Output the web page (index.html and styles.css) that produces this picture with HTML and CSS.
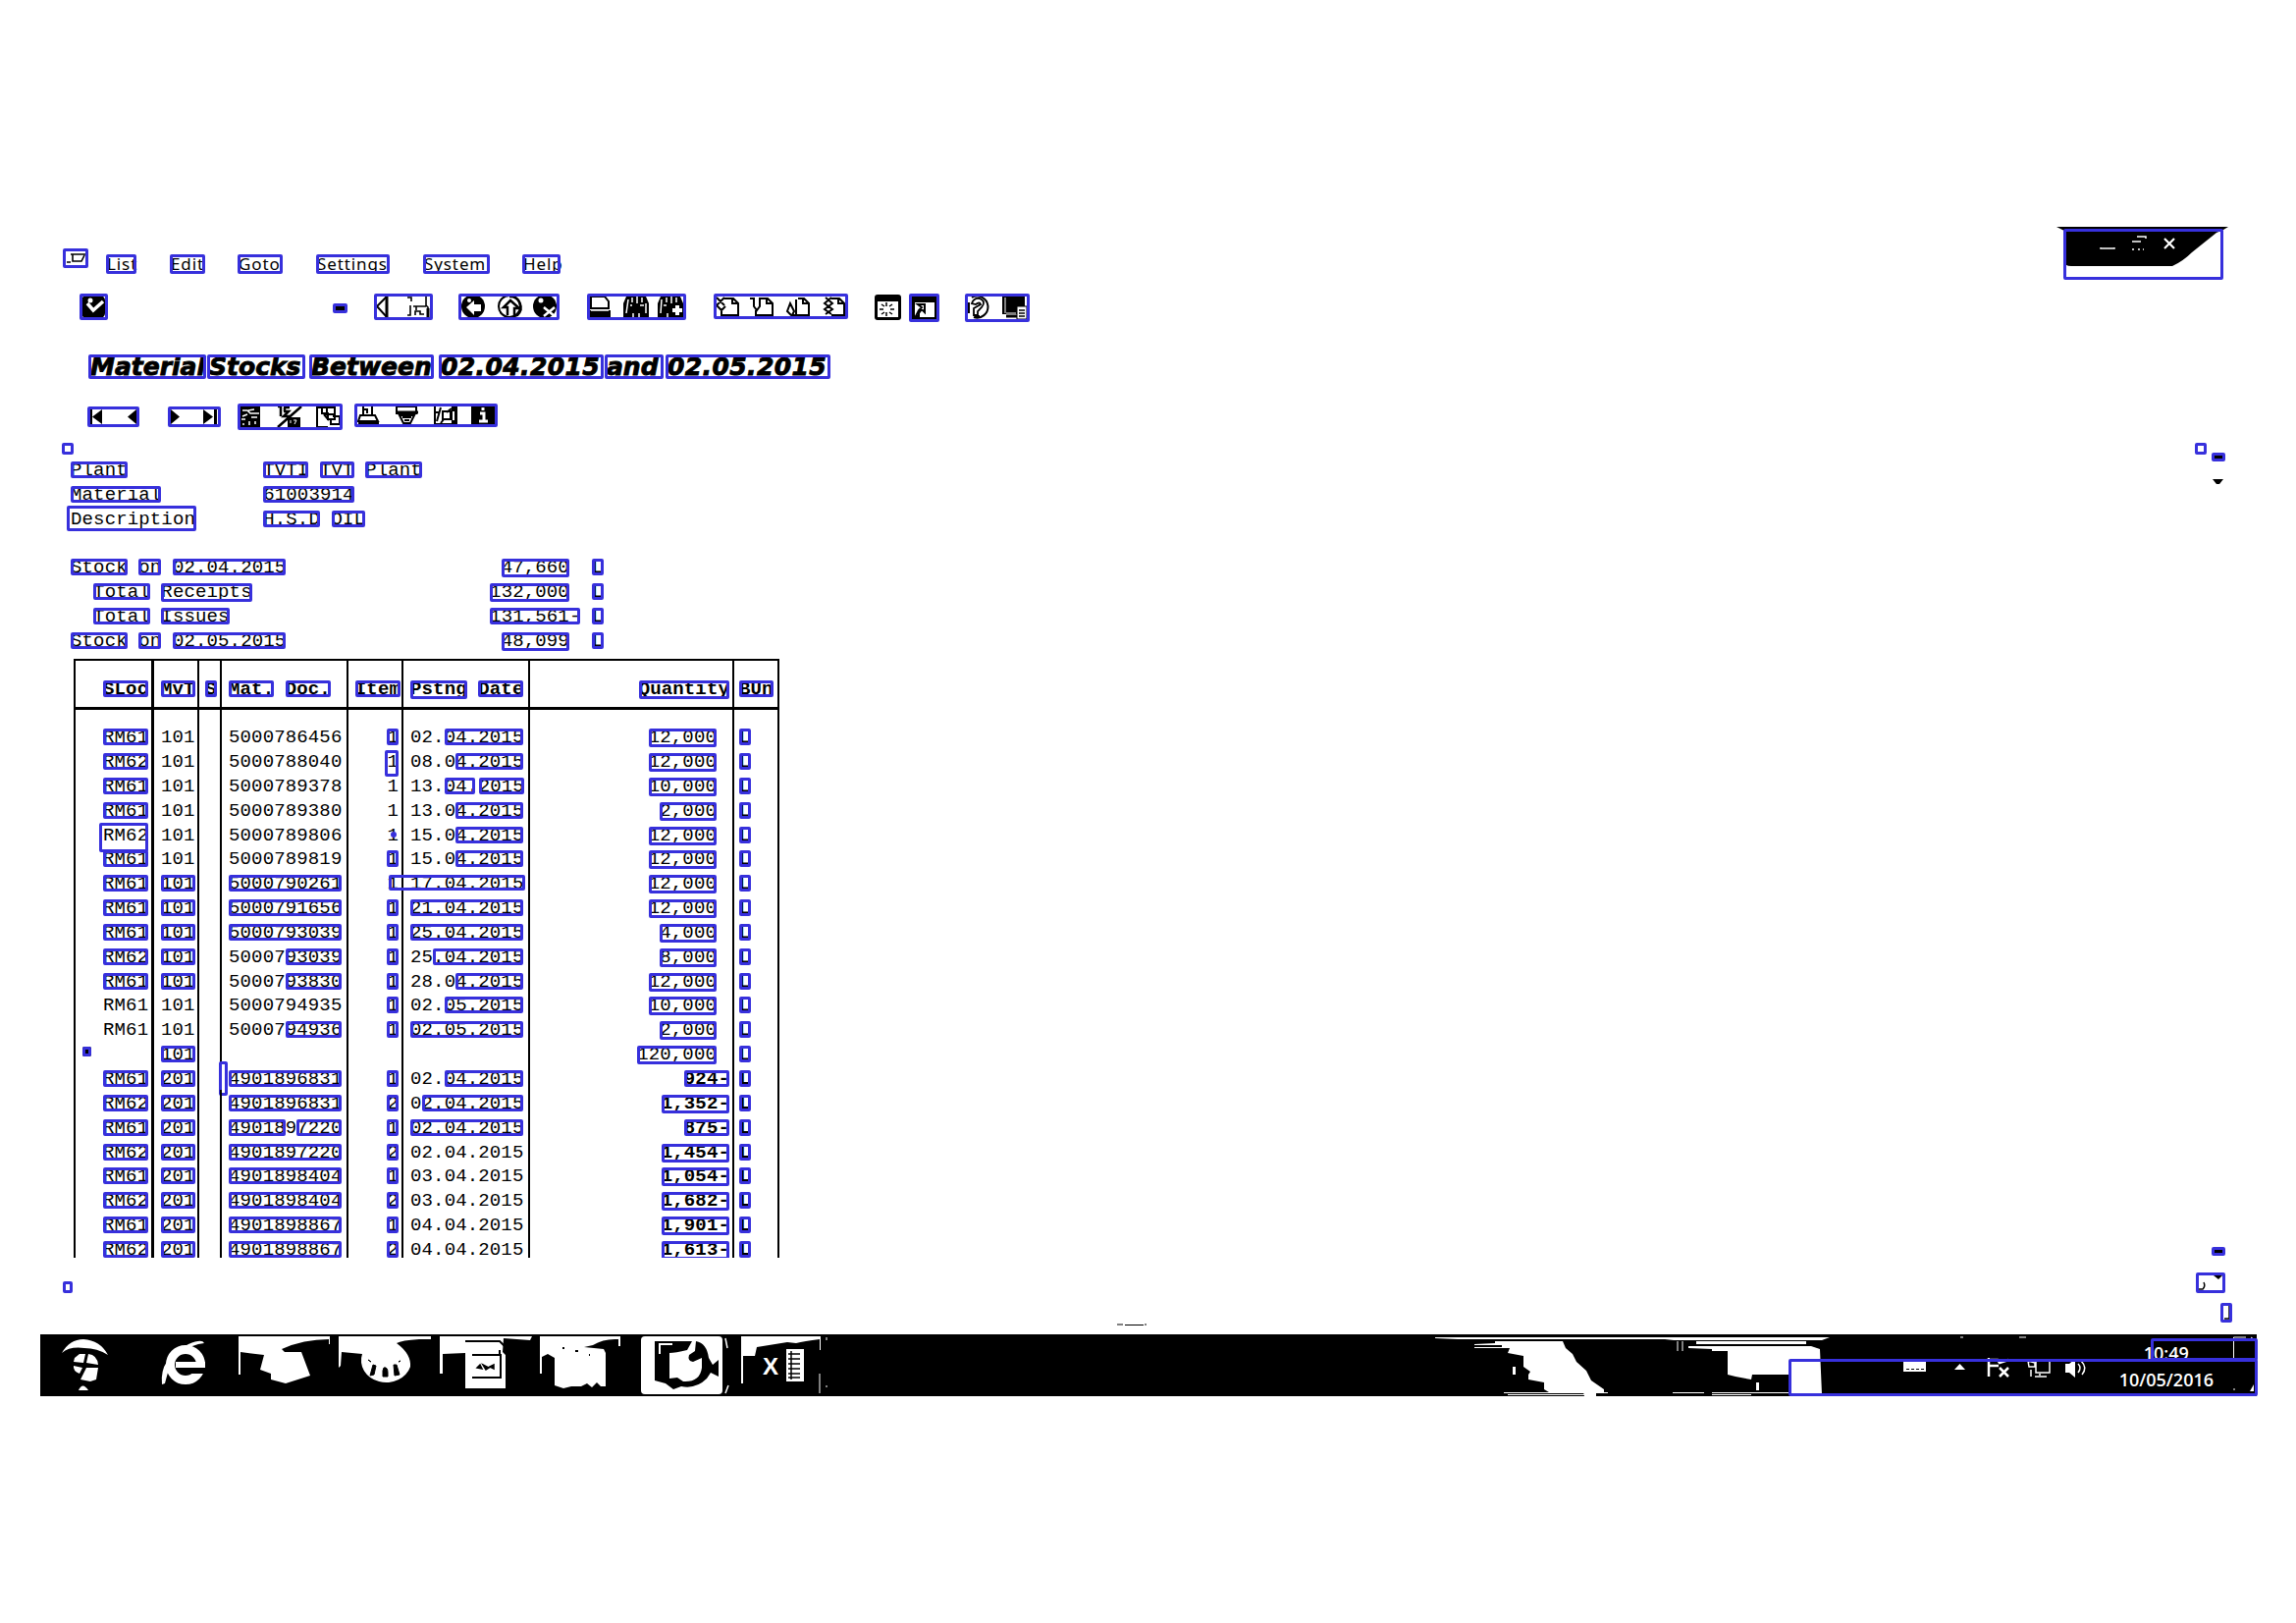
FILE: index.html
```html
<!DOCTYPE html>
<html lang="en">
<head>
<meta charset="utf-8">
<title>Material Stocks</title>
<link rel="stylesheet" href="styles.css">
</head>
<body>
<main class="screen">
  <header class="menubar">
    <svg class="box menu-icon" width="26" height="20"><path d="M8 6H23M10 6V13H19L22 7M12 13H19M4 14H8" fill="none" stroke="#000" stroke-width="1.6"/></svg>
    <nav class="menus">
      <span class="box m-list">List</span><span class="box m-edit">Edit</span><span class="box m-goto">Goto</span><span class="box m-set">Settings</span><span class="box m-sys">System</span><span class="box m-help">Help</span>
    </nav>
    <div class="window-controls">
      <svg width="176" height="54"><path d="M0 0H175L170 3L163 6L138 26Q129 35 118 40H15Q8 40 8 35V4Z"/><path d="M45 21V22H59V21M77 15H86M82 10H91V12M77 23h2m4 0h2m3 0h1" fill="none" stroke="#fff" stroke-width="1.5"/><path d="M110 12L120 22M120 12L110 22" stroke="#fff" stroke-width="2.2"/></svg>
      <span class="box controls-box"></span>
    </div>
  </header>

  <div class="toolbar">
    <svg class="box t-check" width="29" height="27"><rect x="2" y="2" width="24" height="23" rx="5"/><path d="M8 10L14 17L24 8" fill="none" stroke="#fff" stroke-width="3.500"/><circle cx="11" cy="7" r="2.5" fill="#fff"/></svg>
    <svg class="box t-dash" width="15" height="10"><path d="M3 5H12" stroke="#000" stroke-width="4"/></svg>
    <svg class="box t-save" width="60" height="27" fill="none" stroke="#000"><path d="M13 3L3 13L13 24Z" stroke-width="2"/><path d="M13 3V24" stroke-width="3"/><path d="M34 4H38V8M37 12V22H34M40 13H53M53 3V12L55 14V24M42 22V18H47V21H51M43 13V17" stroke-width="1.6"/><path d="M55 15V25" stroke-width="3"/></svg>
    <svg class="box t-nav" width="103" height="27"><circle cx="15" cy="13" r="12"/><path d="M8 14L16 7V11H23V18H16V22Z" fill="#fff"/><circle cx="11" cy="7" r="2" fill="#fff"/><circle cx="52" cy="13" r="11" fill="none" stroke="#000" stroke-width="2"/><path d="M52 3A11 11 0 0 1 60 22L57 23V15H62L53 7L46 14H50V22" fill="none" stroke="#000" stroke-width="2.500"/><circle cx="88" cy="13" r="12"/><circle cx="84" cy="7" r="2.5" fill="#fff"/><path d="M87 14L98 23M98 14L87 23" stroke="#fff" stroke-width="2.5"/></svg>
    <svg class="box t-find" width="101" height="27"><path d="M4 15V3H18L22 8V15Z" fill="#fff" stroke="#000" stroke-width="2"/><path d="M3 17H24V25H3Z"/><path d="M4 17H22" stroke="#fff" stroke-width="1.5"/><path d="M37 25V10L40 3H60L63 10V25Z"/><path d="M42 6L40 20M46 4V9M51 3V10M56 4V9M44 12H46M54 12H58M47 20V25M53 20V25M60 10V20" stroke="#fff" stroke-width="1.5"/><path d="M72 25V10L75 3H95L98 10V25Z"/><path d="M76 6L75 20M81 4V9M86 3V10M91 4V9M78 12H81M82 20V25" stroke="#fff" stroke-width="1.5"/><path d="M92 12V22M87 17H97" stroke="#fff" stroke-width="4"/></svg>
    <svg class="box t-pages" width="137" height="26" fill="none" stroke="#000" stroke-width="2"><path d="M11 5H20L25 10V22H8V18M19 4V10H25M3 4L11 12M11 4L3 12L8 17L12 13"/><path d="M48 5H55L60 10V22H43V17M54 4V10H60M37 5H41V13L44 17L47 13V5H50"/><path d="M86 5H92L97 10V22H84M91 4V10H97M79 22L75 18L78 10L82 18L80 22H84V6"/><path d="M120 5H128L133 10V22H120M127 4V10H133M114 4L121 10L113 16L120 21M120 4L113 10L121 16L114 21"/></svg>
    <svg class="t-new" width="28" height="26"><rect width="27" height="26" rx="3"/><rect x="3" y="7" width="21" height="16" fill="#fff"/><path d="M12 8V12M12 18V22M5 15H9M16 15H20M7 10L10 12M18 10L15 12M7 20L10 18M18 20L15 18" stroke="#000" stroke-width="1.5"/></svg>
    <svg class="box t-link" width="31" height="29"><path d="M3 3H28V26H3Z"/><path d="M6 9H26V24H6Z" fill="#fff"/><path d="M9 11H16V19L13 16L10 20V23H7L10 17L13 14Z" fill="none" stroke="#000" stroke-width="2"/></svg>
    <svg class="box t-help" width="66" height="29" fill="none" stroke="#000"><path d="M7 4A11 11 0 1 1 9 24M4 9V20" stroke-width="2"/><path d="M7 10Q9 4 15 5Q22 8 17 14L13 18V22H9V15L16 11Q15 8 11 11ZM10 23H15" stroke-width="1.8"/><path d="M38 3H61V21H38Z" fill="#000" stroke="none"/><path d="M41 4V20M42 20H52" stroke="#fff"/><path d="M53 13H63V26H53Z" fill="#fff" stroke-width="1"/><path d="M55 17H61M55 20H61M55 23H61" stroke-width="1.5"/><path d="M42 23H53" stroke-width="3"/></svg>
  </div>

  <h1 class="title"><span class="box w1">Material</span><span class="box w2">Stocks</span><span class="box w3">Between</span><span class="box w4">02.04.2015</span><span class="box w5">and</span><span class="box w6">02.05.2015</span></h1>

  <div class="toolbar list-tools">
    <svg class="box l-first" width="53" height="21"><path d="M3 3H5V18H3ZM5 10.500L15 3V18ZM41 10.500L50 3V18Z"/></svg>
    <svg class="box l-last" width="54" height="21"><path d="M3 3L12 10.500L3 18ZM36 3L46 10.500L36 18ZM47 3H50V18H47Z"/></svg>
    <svg class="box l-sum" width="107" height="27"><path d="M3 3H23V24H3Z"/><path d="M5 7H10L13 10H22M5 13L10 11M4 16H8M14 14H20M11 7L17 6M12 18V22M6 20V22M18 18V21" stroke="#fff" stroke-width="1.5" fill="none"/><path d="M41 3H44V13M47 4H53M47 8H52L47 13H53M48 4V8M41 24L65 3" fill="none" stroke="#000" stroke-width="2.500"/><path d="M51 14H64V24H51Z"/><path d="M54 17V20M57 17H60L58 21" stroke="#fff" fill="none"/><path d="M92 24H81V4H91V9M86 4V10H92M90 4H99V11H88M92 9V16H99V11M97 13H104V21H95V16M88 11L93 17" fill="none" stroke="#000" stroke-width="2"/></svg>
    <svg class="box l-print" width="146" height="24"><g fill="none" stroke="#000" stroke-width="2"><path d="M9 3V12M18 3V12M6 12H21L24 18H4ZM9 6H13V10"/><path d="M4 20H25" stroke-width="3"/><path d="M43 3H63V10H43ZM46 12L50 20H57L61 12ZM49 14H58M51 17H56"/><path d="M42 9H65" stroke-width="3"/><path d="M82 3V21H104V3M82 9H87M88 4L84 18M90 8H98V16H90ZM99 5L94 9M91 16L88 20"/></g><path d="M99 3H105V21H99Z"/><path d="M101 8V17" stroke="#fff" stroke-width="2"/><path d="M119 3H143V21H119Z"/><path d="M131 4V7M128 10H132V18M127 18H136" fill="none" stroke="#fff" stroke-width="3"/></svg>
  </div>

  <section class="work">
    <div class="report">
      <span class="box corner"></span>
      <div class="list">
        <p><mark>Plant</mark>            <mark>TVTI</mark> <mark>TVT</mark> <mark>Plant</mark></p>
        <p><mark>Material</mark>         <mark>61003914</mark></p>
        <p><span class="desc">Description<span class="box desc-box"></span></span>      <mark>H.S.D</mark> <mark>OIL</mark></p>
        <p></p>
        <p><mark>Stock</mark> <mark>on</mark> <mark>02.04.2015</mark>                   <mark class="q">47,660</mark>  <mark>L</mark></p>
        <p>  <mark>Total</mark> <mark class="q">Receipts</mark>                     <mark class="q">132,000</mark>  <mark>L</mark></p>
        <p>  <mark>Total</mark> <mark>Issues</mark>                       <mark>131,561-</mark> <mark>L</mark></p>
        <p><mark>Stock</mark> <mark>on</mark> <mark>02.05.2015</mark>                   <mark class="q">48,099</mark>  <mark>L</mark></p>
      </div>
      <div class="table">
        <div class="row head"><p><mark>SLoc</mark></p><p><mark>MvT</mark></p><p><mark>S</mark></p><p><mark>Mat.</mark> <mark>Doc.</mark></p><p><mark>Item</mark></p><p><mark class="q">Pstng</mark> <mark>Date</mark></p><p><mark class="q">Quantity</mark></p><p><mark>BUn</mark></p></div>
        <div class="row first"><p><mark>RM61</mark></p><p>101</p><p></p><p>5000786456</p><p><mark>1</mark></p><p>02.<mark>04.2015</mark></p><p><mark class="q">12,000</mark></p><p><mark>L</mark></p></div>
        <div class="row"><p><mark>RM62</mark></p><p>101</p><p></p><p>5000788040</p><p>1<span class="box tall-item"></span></p><p>08.0<mark>4.2015</mark></p><p><mark class="q">12,000</mark></p><p><mark>L</mark></p></div>
        <div class="row"><p><mark>RM61</mark></p><p>101</p><p></p><p>5000789378</p><p>1</p><p>13.<mark class="short">04.</mark><mark>2015</mark></p><p><mark class="q">10,000</mark></p><p><mark>L</mark></p></div>
        <div class="row"><p><mark>RM61</mark></p><p>101</p><p></p><p>5000789380</p><p>1</p><p>13.0<mark>4.2015</mark></p><p><mark class="q">2,000</mark></p><p><mark>L</mark></p></div>
        <div class="row"><p>RM62<span class="box big-sloc"></span></p><p>101</p><p></p><p>5000789806</p><p>1<span class="dot"></span></p><p>15.0<mark>4.2015</mark></p><p><mark class="q">12,000</mark></p><p><mark>L</mark></p></div>
        <div class="row"><p><mark>RM61</mark></p><p>101</p><p></p><p>5000789819</p><p><mark>1</mark></p><p>15.0<mark>4.2015</mark></p><p><mark class="q">12,000</mark></p><p><mark>L</mark></p></div>
        <div class="row"><p><mark>RM61</mark></p><p><mark>101</mark></p><p></p><p><mark>5000790261</mark></p><p>1<span class="box wide"></span></p><p>17.04.2015</p><p><mark class="q">12,000</mark></p><p><mark>L</mark></p></div>
        <div class="row"><p><mark>RM61</mark></p><p><mark>101</mark></p><p></p><p><mark>5000791656</mark></p><p><mark>1</mark></p><p><mark>21.04.2015</mark></p><p><mark class="q">12,000</mark></p><p><mark>L</mark></p></div>
        <div class="row"><p><mark>RM61</mark></p><p><mark>101</mark></p><p></p><p><mark>5000793039</mark></p><p><mark>1</mark></p><p><mark>25.04.2015</mark></p><p><mark class="q">4,000</mark></p><p><mark>L</mark></p></div>
        <div class="row"><p><mark>RM62</mark></p><p><mark>101</mark></p><p></p><p>50007<mark>93039</mark></p><p><mark>1</mark></p><p>25<mark>.04.2015</mark></p><p><mark class="q">8,000</mark></p><p><mark>L</mark></p></div>
        <div class="row"><p><mark>RM61</mark></p><p><mark>101</mark></p><p></p><p>50007<mark>93830</mark></p><p><mark>1</mark></p><p>28.0<mark>4.2015</mark></p><p><mark class="q">12,000</mark></p><p><mark>L</mark></p></div>
        <div class="row"><p>RM61</p><p>101</p><p></p><p>5000794935</p><p><mark>1</mark></p><p>02.<mark>05.2015</mark></p><p><mark class="q">10,000</mark></p><p><mark>L</mark></p></div>
        <div class="row"><p>RM61</p><p>101</p><p></p><p>50007<mark>94936</mark></p><p><mark>1</mark></p><p><mark>02.05.2015</mark></p><p><mark class="q">2,000</mark></p><p><mark>L</mark></p></div>
        <div class="row"><p><span class="box star"></span></p><p><mark>101</mark></p><p></p><p></p><p></p><p></p><p><mark class="q">120,000</mark></p><p><mark>L</mark></p></div>
        <div class="row neg"><p><mark>RM61</mark></p><p><mark>201</mark></p><p></p><p><mark>4901896831</mark><span class="box sliver"></span></p><p><mark>1</mark></p><p>02.<mark>04.2015</mark></p><p><mark>924-</mark></p><p><mark>L</mark></p></div>
        <div class="row neg"><p><mark>RM62</mark></p><p><mark>201</mark></p><p></p><p><mark>4901896831</mark></p><p><mark>2</mark></p><p>0<mark>2.04.2015</mark></p><p><mark class="q">1,352-</mark></p><p><mark>L</mark></p></div>
        <div class="row neg"><p><mark>RM61</mark></p><p><mark>201</mark></p><p></p><p><mark>49018</mark>9<mark>7220</mark></p><p><mark>1</mark></p><p><mark>02.04.2015</mark></p><p><mark>875-</mark></p><p><mark>L</mark></p></div>
        <div class="row neg"><p><mark>RM62</mark></p><p><mark>201</mark></p><p></p><p><mark>4901897220</mark></p><p><mark>2</mark></p><p>02.04.2015</p><p><mark class="q">1,454-</mark></p><p><mark>L</mark></p></div>
        <div class="row neg"><p><mark>RM61</mark></p><p><mark>201</mark></p><p></p><p><mark>4901898404</mark></p><p><mark>1</mark></p><p>03.04.2015</p><p><mark class="q">1,054-</mark></p><p><mark>L</mark></p></div>
        <div class="row neg"><p><mark>RM62</mark></p><p><mark>201</mark></p><p></p><p><mark>4901898404</mark></p><p><mark>2</mark></p><p>03.04.2015</p><p><mark class="q">1,682-</mark></p><p><mark>L</mark></p></div>
        <div class="row neg"><p><mark>RM61</mark></p><p><mark>201</mark></p><p></p><p><mark>4901898867</mark></p><p><mark>1</mark></p><p>04.04.2015</p><p><mark class="q">1,901-</mark></p><p><mark>L</mark></p></div>
        <div class="row neg"><p><mark>RM62</mark></p><p><mark>201</mark></p><p></p><p><mark>4901898867</mark></p><p><mark>2</mark></p><p>04.04.2015</p><p><mark class="q">1,613-</mark></p><p><mark>L</mark></p></div>
      </div>
      <span class="box corner bottom"></span>
    </div>
    <div class="scroll">
      <span class="box corner"></span>
      <div class="arrows">
        <svg class="box" width="14" height="9"><path d="M3 5H11" stroke="#000" stroke-width="4"/></svg>
        <svg class="down" width="14" height="7"><path d="M1 0H12L8 5H5Z"/></svg>
        <svg class="box up2" width="14" height="9"><path d="M3 5H11" stroke="#000" stroke-width="4"/></svg>
        <svg class="box down2" width="30" height="21"><path d="M18 3H27L23 7Z"/><path d="M8 10Q10 14 7 17H3" fill="none" stroke="#000" stroke-width="1.500"/></svg>
        <svg class="box grip" width="12" height="20"><path d="M9 3V16H4" fill="none" stroke="#000" stroke-width="1.500"/></svg>
      </div>
    </div>
  </section>
  <svg class="handle" width="30" height="3"><path d="M0 1H6M8 1.500H27M28 1H30" stroke="#000"/></svg>

  <footer class="taskbar">
    <svg width="101" height="63" fill="#fff"><path d="M22 19Q30 5 44 5Q61 6 69 21Q58 14 45 14Q30 12 22 19Z"/><path d="M35 24L40 20H46L44 29L34 28ZM49 20Q58 21 59 31L47 29ZM34 32L43 34L40 40Q33 37 34 32ZM47 34L59 34L57 46L51 48L41 46Z"/><path d="M39 57Q43 48 49 57Z"/></svg>
    <svg width="101" height="63"><circle cx="47" cy="31" r="15.500" fill="none" stroke="#fff" stroke-width="9"/><path d="M37 28H67V34H37Z" fill="#fff"/><path d="M49 34H70V40H49Z"/><path d="M23 51Q20 24 50 10Q64 4 66 9L60 10Q32 18 29 39Q27 46 26 50Z" fill="#fff"/></svg>
    <svg class="tile" height="63"><path d="M0 2H93V10H92V5Q66 5 44 15L47 18L64 18L73 42L48 50L33 46V40L22 36L26 21L2 18V41H0Z" fill="#fff"/></svg>
    <svg class="tile" height="63"><path d="M0 2H94V5H82Q64 6 59 9Q74 20 73 33A25 22 0 1 1 24 20L3 18L2 32L0 34Z" fill="#fff"/><path d="M35 31L38 32L36 41L32 42ZM46 34Q50 33 50 39V43H45V37ZM56 31L59 31L62 41L57 42ZM30 26L33 28ZM61 28L63 27Z" stroke="#000"/></svg>
    <svg class="tile" height="63"><path d="M0 2H94L92 6L65 4L64 18L67 21V55H26V19L3 20V40H0Z" fill="#fff"/><path d="M26 7H61L66 12M33 21H62V44H33M61 16V22" fill="none" stroke="#000" stroke-width="2"/><path d="M38 34L41 31L43 35ZM44 31L50 34L47 36ZM51 33L55 31V35Z" stroke="#000" stroke-width="1.500"/></svg>
    <svg class="tile" height="63"><path d="M0 2H82V12H80V5Q65 4 54 11L45 13L65 15L67 19V53H62L58 49L53 54L48 50L42 53H32L24 55L15 52V24L8 20L2 23V40H0Z" fill="#fff"/><path d="M23 14h2M36 17h3M50 21h1" stroke="#000" stroke-width="2"/></svg>
    <svg class="tile" height="63"><rect y="2" width="83" height="59" rx="4" fill="#fff"/><path d="M14 7H52L47 16Q35 19 29 19V45L37 44L43 48Q60 49 62 34V24L53 28Q47 27 49 21L55 17L56 7Q67 9 69 24L73 31L79 26V43L71 39L67 45Q56 56 41 53L33 56L25 50L14 47Z"/><path d="M19 20V10H32" fill="none" stroke="#fff" stroke-width="2"/><path d="M86 4L88 14M86 60L89 52M4 40h2" stroke="#fff" stroke-width="1.500"/></svg>
    <svg class="tile" height="63"><path d="M0 2H81V16H80V5Q64 7 56 9L47 8L16 13L14 22L2 22V50H0Z" fill="#fff"/><path d="M46 15H64V48H46Z" fill="#fff"/><path d="M48 20H60M48 25H60M48 30H60M48 35H60M48 40H60M48 44H60M51 17V46" stroke="#000" stroke-width="1.500"/><text x="22" y="41" class="xl">X</text><path d="M80 40V60M87 3V6M87 52V54" stroke="#fff"/></svg>
    <svg class="glare" width="430" height="63" fill="#fff"><path d="M22 3H424L416 6L265 6L256 5H45L22 4Z"/><path d="M62 10L83 9V7H152L155 14L162 20L166 28L176 37L181 47L194 56V59H186V63H174L173 59H138L133 56L133 49L117 46V41L119 38L112 33V22L96 19L98 14L62 14V13H90V11H62Z"/><path d="M288 7H400V10H288ZM280 12H405L414 15L416 61H384V41H345L344 46L328 43L320 41V17H304V15L280 14ZM101 33H104V41H101ZM349 49H352V57H349Z"/><path d="M92 59.500H198M96 61.500H180M264 59.500H296M304 59.500H384M304 61.500H344M269 7V17M274 7V17" stroke="#fff"/></svg>
    <svg class="tray" width="220" height="63" fill="#fff"><path d="M19 28H42V38H19ZM71 36L76.500 30L82 36Z"/><path d="M22 35.500H40" stroke="#000" stroke-dasharray="3 2"/><path d="M106 24V43M108 26H115L117 29L126 26M107 32H116M117 34L126 43M126 34L117 43" stroke="#fff" stroke-width="2.500" fill="none"/><path d="M146 27L153 29V33H147ZM149 36V43M154 27V39H168V27M153 43H165M158 40V42" stroke="#fff" stroke-width="1.500" fill="none"/><path d="M184 30H188L194 25V44L188 39H184Z"/><path d="M197 30Q201 34 197 39M200 27Q207 34 201 41" stroke="#fff" stroke-width="1.500" fill="none"/><path d="M77 3h3M137 3h7" stroke="#fff"/></svg>
    <div class="clock"><span>10:49</span><span>10/05/2016</span></div>
    <svg width="25" height="63" fill="none" stroke="#fff"><path d="M2.500 24V3H15M2 56h2M20 3L23 5"/><path d="M23 51V58H19Z" fill="#fff" stroke="none"/></svg>
    <span class="box time-box"></span><span class="box date-box"></span>
  </footer>
</main>
</body>
</html>
```
FILE: styles.css
```css
* { box-sizing: border-box; margin: 0; }
body { background: #fff; color: #000; }
svg { display: block; flex: none; }
.screen { width: 2339px; height: 1653px; padding: 231px 40px 0 41px; overflow: hidden; }

/* blue selection frame, painted over what it surrounds */
.box { outline: 3px solid #3730dc; outline-offset: -3px; border-radius: 2px; flex: none; display: block; }

.menubar { display: flex; height: 60px; }
.menu-icon { margin: 22px 0 0 23px; }
.menus { display: flex; margin: 28px 0 0 18px; font: 17px/19px "Noto Sans", sans-serif; letter-spacing: 0.9px; }
.menus .box { height: 20px; padding-left: 1px; white-space: nowrap; }
.m-list { width: 31px; margin-right: 34px; }
.m-edit { width: 36px; margin-right: 33px; }
.m-goto { width: 46px; margin-right: 34px; }
.m-set { width: 75px; margin-right: 34px; }
.m-sys { width: 68px; margin-right: 33px; }
.m-help { width: 39px; }
.window-controls { position: relative; margin-left: auto; margin-right: 28px; width: 176px; }
.controls-box { position: absolute; left: 7px; top: 2px; width: 163px; height: 52px; }

.toolbar { display: flex; margin-top: 8px; height: 29px; }
.t-check { margin-left: 40px; }
.t-dash { margin: 10px 0 0 229px; }
.t-save { margin-left: 27px; }
.t-nav { margin-left: 26px; }
.t-find { margin-left: 28px; }
.t-pages { margin-left: 28px; }
.t-new { margin: 1px 0 0 27px; }
.t-link { margin-left: 7px; }
.t-help { margin-left: 26px; }

.title { display: flex; margin: 33px 0 0 49px; height: 25px; font: italic bold 25px/26px "DejaVu Sans", sans-serif; -webkit-text-stroke: 0.9px #000; }
.title .box { height: 25px; padding-left: 2px; white-space: nowrap; }
.w1 { width: 120px; }
.w2 { width: 100px; margin-left: 1px; }
.w3 { width: 127px; margin-left: 4px; }
.w4 { width: 168px; margin-left: 5px; letter-spacing: 0.4px; }
.w5 { width: 60px; margin-left: 1px; }
.w6 { width: 168px; margin-left: 2px; letter-spacing: 0.4px; }

.list-tools { margin-top: 25px; height: 27px; }
.l-first { margin: 3px 0 0 48px; }
.l-last { margin: 3px 0 0 29px; }
.l-sum { margin-left: 17px; }
.l-print { margin-left: 12px; }

.work { display: flex; justify-content: space-between; margin-top: 13px; height: 897px; }
.report { margin-left: 22px; font: 19px/19px "Liberation Mono", monospace; letter-spacing: 0.14px; }
.corner { width: 12px; height: 12px; }
.corner.bottom { margin: 24px 0 0 1px; width: 10px; }
.list { margin: 7px 0 0 9px; height: 201px; }
.list p { height: 24.857px; white-space: pre; }
.report mark { display: inline-block; height: 17px; background: none; color: inherit; outline: 3px solid #3730dc; outline-offset: -3px; border-radius: 2px; }
.report mark.q { height: 19px; margin-bottom: -2px; }
.report mark.short { width: 31px; margin-right: 4px; }
.desc { position: relative; }
.desc-box { position: absolute; left: -4px; top: -3px; width: 132px; height: 26px; }

.table { margin-left: 12px; width: 719px; height: 610px; border-top: 2px solid #000; border-right: 2px solid #000; overflow: hidden; }
.row { display: grid; grid-template-columns: 79px 47px 23px 129px 56px 129px 208px 46px; height: 24.857px; }
.row p { position: relative; border-left: 2px solid #000; padding-top: 5px; white-space: nowrap; }
.row p:nth-child(1) { padding-left: 28px; }
.row p:nth-child(2) { padding-left: 7px; border-left-width: 3px; }
.row p:nth-child(3) { padding-left: 6px; }
.row p:nth-child(4) { padding-left: 7px; }
.row p:nth-child(5) { padding-right: 3px; text-align: right; }
.row p:nth-child(6) { padding-left: 7px; }
.row p:nth-child(7) { padding-right: 16px; text-align: right; }
.row p:nth-child(8) { padding-left: 5px; }
.row.head { height: 50px; border-bottom: 3px solid #000; font-weight: bold; }
.row.head p { padding-top: 20px; }
.row.head p:nth-child(5) { padding-right: 1px; }
.row.head p:nth-child(7), .row.neg p:nth-child(7) { padding-right: 3px; }
.row.neg p:nth-child(n+7) { font-weight: bold; }
.row.first { height: 39px; }
.row.first p { padding-top: 19px; }
.tall-item { position: absolute; left: 37px; top: 2px; width: 14px; height: 27px; }
.big-sloc { position: absolute; left: 24px; top: 1px; width: 50px; height: 30px; z-index: 1; }
.dot { position: absolute; left: 43px; top: 10px; width: 6px; height: 6px; border-radius: 3px; background: #3730dc; }
.wide { position: absolute; left: 41px; top: 5px; width: 139px; height: 16px; z-index: 1; }
.star { margin: 1px 0 0 -21px; width: 9px; height: 10px; background: #000; }
.sliver { position: absolute; left: -3px; top: -4px; width: 9px; height: 35px; }

.scroll { display: flex; margin-right: 25px; }
.scroll > .corner { margin-right: -12px; position: relative; z-index: 1; }
.arrows { display: flex; flex-direction: column; align-items: flex-end; width: 38px; padding: 10px 7px 0 0; }
.down { margin-top: 18px; }
.up2 { margin-top: 775px; }
.down2 { margin-top: 17px; }
.grip { margin: 10px -7px 0 0; }
.handle { margin-left: 1097px; }

.taskbar { position: relative; display: flex; margin-top: 8px; width: 2258px; height: 63px; background: #000; }
.tile { width: 102.4px; }
.xl { font: bold 24px "Liberation Sans", sans-serif; fill: #fff; }
.glare { margin-left: 583px; }
.tray { margin-left: 50px; }
.clock { display: flex; flex-direction: column; align-items: center; width: 133px; padding-top: 6px; color: #fff; font: 600 18px/27px "Open Sans", sans-serif; }
.time-box { position: absolute; left: 2150px; top: 4px; width: 109px; height: 23px; }
.date-box { position: absolute; left: 1781px; top: 25px; width: 478px; height: 38px; }
```
